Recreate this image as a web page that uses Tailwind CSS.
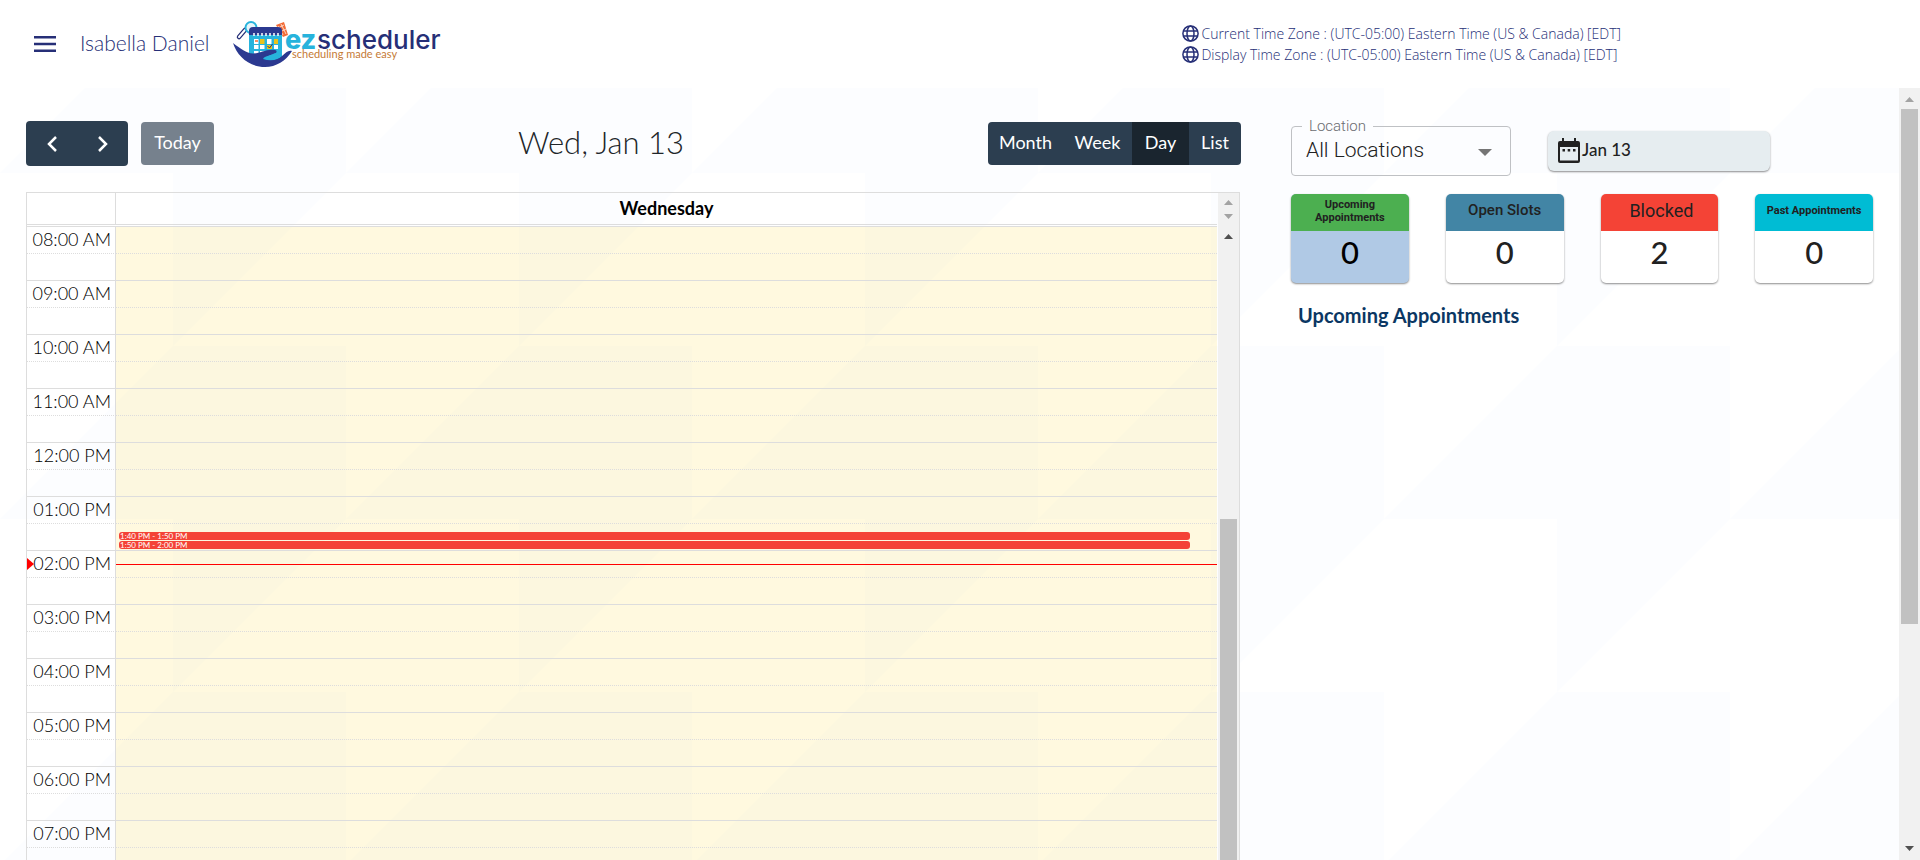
<!DOCTYPE html>
<html lang="en">
<head>
<meta charset="utf-8">
<meta name="viewport" content="width=device-width, initial-scale=1">
<title>ezscheduler</title>
<script src="https://cdn.jsdelivr.net/npm/@tailwindcss/browser@4"></script>
</head>
<body class="relative isolate flex h-screen flex-col overflow-hidden bg-white font-['Lato',sans-serif] text-black">

<!-- Page background pattern -->
<svg class="absolute inset-0 -z-10 h-full w-full" aria-hidden="true">
  <defs>
    <pattern id="tiles" width="346" height="346" patternUnits="userSpaceOnUse">
      <path d="M173 0H346V173H0ZM173 173H346L173 346Z" fill="#fcfdff"/>
    </pattern>
  </defs>
  <rect width="100%" height="100%" fill="url(#tiles)"/>
</svg>

<header class="flex h-[88px] shrink-0 items-center bg-white pl-8 text-[#262f77]">
  <button type="button" aria-label="Menu" class="mr-6 text-[#262f77]">
    <svg class="h-6 w-6" viewBox="0 0 24 24" fill="currentColor"><path d="M2 4h22v2.500H2zM2 10.700h22v2.500H2zM2 17.500h22V20H2z"/></svg>
  </button>
  <span class="w-[153px] pb-[2px] text-[21px] font-light whitespace-nowrap">Isabella Daniel</span>
  <a href="#" aria-label="ezscheduler home">
    <svg class="h-12 w-[212px]" viewBox="0 0 212 48">
      <!-- ticket -->
      <path d="M43 5l8-3 4 13-5 2z" fill="#f26b35"/>
      <path d="M45 6l5 9M48 4l5 10M45 8l6-3M47 12l6-3" stroke="#fff" stroke-width=".7"/>
      <!-- magnifier -->
      <path d="M12 10l-6 7" stroke="#262f77" stroke-width="4.500" stroke-linecap="round"/>
      <path d="M12 10l-6 7" stroke="#fff" stroke-width="2" stroke-linecap="round"/>
      <circle cx="18" cy="7.500" r="5.500" fill="#e6f6fb" stroke="#27b3dc" stroke-width="2"/>
      <!-- calendar -->
      <path d="M16 10h33v31H16z" fill="#27b3dc"/>
      <path d="M16 15V11q0-4 4-4h25q4 0 4 4v4z" fill="#2b3990"/>
      <path d="M21 13v3M25 13v3M29 13v3M33 13v3M37 13v3M41 13v3M45 13v3" stroke="#fff" stroke-width="1.500"/>
      <path d="M21 19h4.500v5H21zM34 19h4.500v5H34zM21 25h4.500v4H21zM27 25h4.500v4H27zM41 25h4v4h-4zM21 31h4.500v4H21zM27 31h4.500v4H27z" fill="#fff"/>
      <path d="M27 19h4.500v5H27zM41 19h4v5h-4zM34 25h5v4h-5z" fill="#eac21c"/>
      <path d="M22 21h3" stroke="#f26b35" stroke-width="1.500"/>
      <path d="M34.500 26l2 2 3-4" stroke="#262f77" stroke-width="1" fill="none"/>
      <!-- hand -->
      <path d="M0 23C8 29 13 33 20 33.500c7 .4 12-4.500 22-3.500 2.500.5 2 3-1 4-5 1.500-8 2.500-11 5 8 2.500 15 1 19-3 4-3.500 6-6 10-5C53 41 43 47 32 47 16 47 4 36 0 23z" fill="#2b3990"/>
      <path d="M30 38.500c3-3 8-3 11-5 3-1 5-1 8-3v5c-5 5-12 5-19 3z" fill="#27b3dc"/>
      <text x="52" y="29" font-family="Inter, sans-serif" font-size="27" font-weight="800" fill="#27b3dc">ez</text>
      <text x="84" y="29" font-family="Inter, sans-serif" font-size="26" font-weight="500" fill="#262f77">scheduler</text>
      <text x="59" y="38" font-family="Lato, sans-serif" font-size="11" fill="#c57a35">scheduling made easy</text>
    </svg>
  </a>
  <div class="mr-[299px] ml-auto flex flex-col pb-px font-['Open_Sans',sans-serif] text-[14px] leading-[21px] font-light">
    <div class="flex items-center gap-[2px]">
      <svg class="h-[17px] w-[17px]" viewBox="0 0 17 17" fill="none" stroke="currentColor" stroke-width="1.500"><circle cx="8.500" cy="8.500" r="7.600"/><ellipse cx="8.500" cy="8.500" rx="3.500" ry="7.600"/><path d="M1.500 6h14M1.500 11h14"/></svg>
      <span>Current Time Zone : (UTC-05:00) Eastern Time (US &amp; Canada) [EDT]</span>
    </div>
    <div class="flex items-center gap-[2px]">
      <svg class="h-[17px] w-[17px]" viewBox="0 0 17 17" fill="none" stroke="currentColor" stroke-width="1.500"><circle cx="8.500" cy="8.500" r="7.600"/><ellipse cx="8.500" cy="8.500" rx="3.500" ry="7.600"/><path d="M1.500 6h14M1.500 11h14"/></svg>
      <span>Display Time Zone : (UTC-05:00) Eastern Time (US &amp; Canada) [EDT]</span>
    </div>
  </div>
</header>

<div class="flex min-h-0 flex-1">
  <main class="grid min-w-0 flex-1 grid-cols-[1215fr_582fr] gap-[50px] overflow-hidden px-[26px] pt-[33px]">

    <section aria-label="Calendar">
      <div class="flex h-[45px] items-center justify-between">
        <div class="flex items-center gap-[13px]">
          <div class="flex h-[45px] overflow-hidden rounded bg-[#2c3e50] text-white">
            <button type="button" aria-label="Previous day" class="flex w-[51px] items-center justify-center"><svg class="h-4 w-4" viewBox="0 0 16 16" fill="none" stroke="currentColor" stroke-width="2.500"><path d="M12 1L5 8l7 7"/></svg></button>
            <button type="button" aria-label="Next day" class="flex w-[51px] items-center justify-center"><svg class="h-4 w-4" viewBox="0 0 16 16" fill="none" stroke="currentColor" stroke-width="2.500"><path d="M4 1l7 7-7 7"/></svg></button>
          </div>
          <button type="button" class="h-[43px] w-[73px] rounded bg-[#76818d] pb-[2px] text-[18px] text-white">Today</button>
        </div>
        <h2 class="pb-[2px] text-[31px] font-light text-[#212529]">Wed, Jan 13</h2>
        <div class="flex h-[43px] overflow-hidden rounded bg-[#2c3e50] text-[18px] text-white">
          <button type="button" class="w-[75px] pb-[2px]">Month</button>
          <button type="button" class="w-[69px] pb-[2px]">Week</button>
          <button type="button" class="w-[57px] bg-[#1a252f] pb-[2px]">Day</button>
          <button type="button" class="w-[52px] pb-[2px]">List</button>
        </div>
      </div>

      <div class="mt-[26px] mr-px flex border border-b-0 border-[#ddd]">
        <div class="min-w-0 flex-1">
          <div class="flex h-8 border-b border-[#ddd]">
            <div class="w-[89px] border-r border-[#ddd]"></div>
            <div class="flex flex-1 items-center justify-center text-[18px] font-bold">Wednesday</div>
          </div>
          <div class="relative mt-px">
            <table class="w-full table-fixed border-separate border-spacing-0">
              <colgroup><col class="w-[89px]"><col></colgroup>
              <tbody id="slots"></tbody>
            </table>
            <!-- Booked slots -->
            <div class="absolute top-[306px] right-[27px] left-[92px] flex flex-col gap-px text-[8px] leading-[8px] text-white">
              <a href="#" class="h-2 rounded-[3px] bg-[#f44336] pl-px">1:40 PM - 1:50 PM</a>
              <a href="#" class="h-2 rounded-[3px] bg-[#f44336] pl-px">1:50 PM - 2:00 PM</a>
            </div>
            <!-- Current time -->
            <div class="absolute top-[338px] right-0 left-[89px] h-px bg-[#ff0000]"></div>
            <div class="absolute top-[332px] left-0 border-y-[6px] border-l-[7px] border-y-transparent border-l-[#ff0000]"></div>
          </div>
        </div>
        <!-- Calendar scrollbars -->
        <div class="ml-px flex w-[21px] flex-col items-center bg-[#f1f1f1]" aria-hidden="true">
          <svg class="h-[50px] w-[21px]" viewBox="0 0 21 50"><path d="M6 12l4.500-5 4.500 5zM6 21l4.500 5 4.500-5z" fill="#a3a3a3"/><path d="M6 46l4.500-5 4.500 5z" fill="#505050"/></svg>
          <div class="mt-[276px] w-[17px] flex-1 bg-[#c1c1c1]"></div>
        </div>
      </div>
    </section>

    <aside class="text-[#212121]">
      <div class="flex items-start gap-[37px] pt-[5px]">
        <div class="relative h-[50px] w-[220px] rounded border border-[#bfc1c4]">
          <label for="location" class="absolute -top-[11px] left-[10px] bg-[#fcfdff] px-[7px] font-['Roboto',sans-serif] text-[15px] leading-[20px] font-light text-[#6a6c70]">Location</label>
          <select id="location" class="h-full w-full appearance-none bg-transparent px-[14px] font-['Roboto',sans-serif] text-[21px] font-light">
            <option>All Locations</option>
          </select>
          <svg class="pointer-events-none absolute top-[22px] right-[18px] h-[7px] w-[14px]" viewBox="0 0 14 7" fill="#757575"><path d="M0 0h14L7 7z"/></svg>
        </div>
        <button type="button" class="mt-[5px] flex h-10 w-[222px] items-center gap-px rounded-md bg-[#e6edf0] pl-[9px] text-[17px] font-medium shadow-[0_1px_2px_rgba(0,0,0,0.45)]">
          <svg class="h-[26px] w-[24px]" viewBox="0 0 24 26" fill="#212121"><path d="M5 0h2v3h10V0h2v3h2q2 0 2 2v18q0 2-2 2H3q-2 0-2-2V5q0-2 2-2h2zM3 9v13.500h18V9z" fill-rule="evenodd"/><path d="M5.500 11h2.500v2.500H5.500zM10.700 11h2.500v2.500h-2.500zM16 11h2.500v2.500H16z"/></svg>
          <span class="pb-[2px]">Jan 13</span>
        </button>
      </div>

      <div class="mt-[18px] grid grid-cols-4 gap-[37px] text-center">
        <button type="button" class="flex h-[89px] flex-col overflow-hidden rounded-[5px] bg-[#b0c9e5] text-black shadow-[0_1px_2px_rgba(0,0,0,0.45)]">
          <span class="flex h-[37px] w-full items-center justify-center bg-[#4caf50] px-4 pb-1 font-['Roboto',sans-serif] text-[11px] leading-[13px] font-bold text-[#212121]">Upcoming Appointments</span>
          <span class="w-full text-[31px] leading-[42px] font-medium">0</span>
        </button>
        <button type="button" class="flex h-[89px] flex-col overflow-hidden rounded-[5px] bg-white shadow-[0_1px_2px_rgba(0,0,0,0.45)]">
          <span class="flex h-[37px] w-full items-center justify-center bg-[#4285a5] pb-1 font-['Roboto',sans-serif] text-[15px] font-medium">Open Slots</span>
          <span class="w-full text-[31px] leading-[42px] font-medium">0</span>
        </button>
        <button type="button" class="flex h-[89px] flex-col overflow-hidden rounded-[5px] bg-white shadow-[0_1px_2px_rgba(0,0,0,0.45)]">
          <span class="flex h-[37px] w-full items-center justify-center bg-[#f44336] pb-1 pl-1 font-['Roboto',sans-serif] text-[18px]">Blocked</span>
          <span class="w-full text-[31px] leading-[42px] font-medium">2</span>
        </button>
        <button type="button" class="flex h-[89px] flex-col overflow-hidden rounded-[5px] bg-white shadow-[0_1px_2px_rgba(0,0,0,0.45)]">
          <span class="flex h-[37px] w-full items-center justify-center bg-[#00bcd4] pb-[3px] font-['Roboto',sans-serif] text-[11px] font-bold">Past Appointments</span>
          <span class="w-full text-[31px] leading-[42px] font-medium">0</span>
        </button>
      </div>

      <h3 class="mt-[18px] pl-[7px] text-[20px] leading-7 font-bold text-[#0b3763]">Upcoming Appointments</h3>
    </aside>
  </main>

  <!-- Page scrollbar -->
  <div class="flex w-[21px] flex-col items-center bg-[#f1f1f1]" aria-hidden="true">
    <svg class="h-[21px] w-[21px]" viewBox="0 0 21 21" fill="#a3a3a3"><path d="M6 14l4.500-5 4.500 5z"/></svg>
    <div class="w-[17px] flex-[515] bg-[#c1c1c1]"></div>
    <div class="flex-[215]"></div>
    <svg class="h-[21px] w-[21px]" viewBox="0 0 21 21" fill="#505050"><path d="M6 7l4.500 5 4.500-5z"/></svg>
  </div>
</div>

<script>
  const hours = ["08:00 AM", "09:00 AM", "10:00 AM", "11:00 AM", "12:00 PM", "01:00 PM", "02:00 PM", "03:00 PM", "04:00 PM", "05:00 PM", "06:00 PM", "07:00 PM"];
  document.getElementById("slots").innerHTML = hours.map(h => `
    <tr class="h-[27px]">
      <th scope="row" class="border-t border-r border-[#ddd] p-0 pr-1 pb-[2px] text-right text-[18px] leading-[24px] font-light whitespace-nowrap">${h}</th>
      <td class="border-t border-[#ddd] bg-[#ffd528]/15 p-0"></td>
    </tr>
    <tr class="h-[27px]">
      <th class="border-t border-r border-[#ddd] [border-top-style:dotted] p-0"></th>
      <td class="border-t border-[#ddd] [border-top-style:dotted] bg-[#ffd528]/15 p-0"></td>
    </tr>`).join("");
</script>
</body>
</html>
